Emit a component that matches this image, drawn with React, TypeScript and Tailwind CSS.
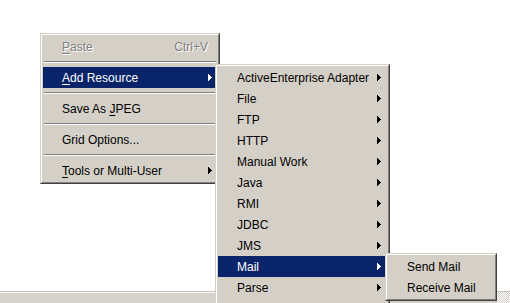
import React from "react";

type Item = {
  label: React.ReactNode;
  sub?: boolean;
  active?: boolean;
  disabled?: boolean;
  accel?: string;
  sep?: boolean;
};

const Arrow = ({ color }: { color: string }) => (
  <svg width="4" height="7" viewBox="0 0 4 7" className="block" shapeRendering="crispEdges">
    <path d="M0 0h1v1h1v1h1v1h1v1h-1v1h-1v1h-1v1h-1z" fill={color} />
  </svg>
);

const U = ({ children }: { children: React.ReactNode }) => (
  <span className="underline underline-offset-[2px] decoration-1">{children}</span>
);

const Separator = () => (
  <div className="h-[10px] pt-[4px] px-[1px]">
    <div className="border-t border-t-[#808080] border-b border-b-white" />
  </div>
);

const MenuRow = ({ item, arrowPad }: { item: Item; arrowPad: string }) => {
  const text = item.disabled
    ? "text-[#808080] [text-shadow:1px_1px_0_#ffffff]"
    : item.active
    ? "text-white"
    : "text-black";
  return (
    <div className={`h-[21px] flex items-center justify-between pl-[19px] ${item.active ? "bg-[#0a246a]" : ""}`}>
      <span className={`whitespace-nowrap ${text}`}>{item.label}</span>
      {item.accel && <span className={`pr-[9px] whitespace-nowrap ${text}`}>{item.accel}</span>}
      {item.sub && (
        <span className={arrowPad}>
          <Arrow color={item.active ? "#ffffff" : "#000000"} />
        </span>
      )}
    </div>
  );
};

const Popup = ({ items, className, arrowPad = "pr-[6px]", extra }: { items: Item[]; className: string; arrowPad?: string; extra?: boolean }) => (
  <div className={`absolute border border-t-[#d4d0c8] border-l-[#d4d0c8] border-r-[#404040] border-b-[#404040] bg-[#d4d0c8] ${className}`}>
    <div className="border border-t-white border-l-white border-r-[#808080] border-b-[#808080] p-[1px]">
      {items.map((it, i) =>
        it.sep ? <Separator key={i} /> : <MenuRow key={i} item={it} arrowPad={arrowPad} />
      )}
      {extra && <div className="h-[21px]" />}
    </div>
  </div>
);

const mainItems: Item[] = [
  { label: <><U>P</U>aste</>, disabled: true, accel: "Ctrl+V" },
  { label: "", sep: true },
  { label: <><U>A</U>dd Resource</>, sub: true, active: true },
  { label: "", sep: true },
  { label: <>Save As <U>J</U>PEG</> },
  { label: "", sep: true },
  { label: "Grid Options..." },
  { label: "", sep: true },
  { label: <><U>T</U>ools or Multi-User</>, sub: true },
];

const resourceItems: Item[] = [
  "ActiveEnterprise Adapter",
  "File",
  "FTP",
  "HTTP",
  "Manual Work",
  "Java",
  "RMI",
  "JDBC",
  "JMS",
  "Mail",
  "Parse",
].map((l) => ({ label: l, sub: true, active: l === "Mail" }));

const mailItems: Item[] = [{ label: "Send Mail" }, { label: "Receive Mail" }];

export default function App() {
  return (
    <div className="relative w-[510px] h-[303px] overflow-hidden bg-white font-['Liberation_Sans',Arial,sans-serif] text-[12px] leading-none select-none">
      <div className="flex flex-col h-full">
        <div className="flex-1 bg-white" />
        <div className="h-[12px] flex border-t border-t-[#c4c1bb]">
          <div className="flex-1 bg-[#d6d3ce] border-t border-t-white" />
          <div className="w-[13px] bg-[repeating-conic-gradient(#d4d0c8_0_25%,#ffffff_0_50%)] bg-[length:2px_2px]" />
        </div>
      </div>

      <Popup items={mainItems} className="left-[40px] top-[33px] w-[180px]" arrowPad="pr-[5px]" />
      <Popup items={resourceItems} className="left-[215px] top-[64px] w-[175px]" extra />
      <Popup items={mailItems} className="left-[385px] top-[253px] w-[112px]" />
    </div>
  );
}
